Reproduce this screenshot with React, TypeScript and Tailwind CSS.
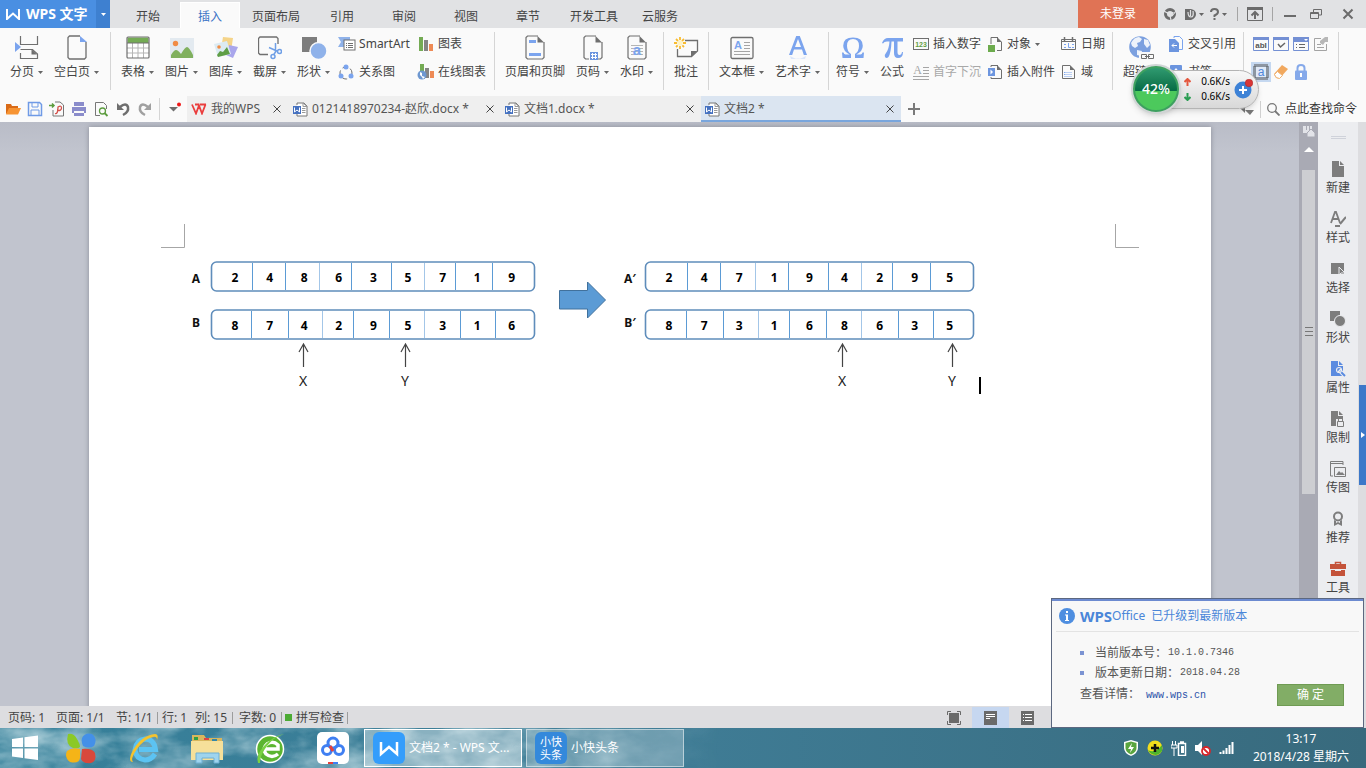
import type { ReactNode } from 'react';

interface SvgProps {
  w: number;
  h: number;
  children: ReactNode;
}

function Svg({ w, h, children }: SvgProps) {
  return (
    <svg width={w} height={h} viewBox={`0 0 ${w} ${h}`} fill="none" className="shrink-0" aria-hidden="true">
      {children}
    </svg>
  );
}

const Caret = () => (
  <Svg w={5} h={3}>
    <path d="M0 0h5L2.5 3z" fill="#666" />
  </Svg>
);

/* ---------- Ribbon icons ---------- */

const GRAY = '#6f6f6f';
const BLUE = '#7ba4ee';

const PageBreakIcon = () => (
  <Svg w={24} h={26}>
    <path d="M5.500 2v8.500h17V2M5.500 19v5.500h17V20l-5-4.500h-12" stroke={GRAY} strokeWidth="1.200" />
    <path d="M16.500 15v5.500H22z" fill={GRAY} />
    <path d="M0 8l6 5-6 5z" fill={BLUE} />
  </Svg>
);

const BlankPageIcon = () => (
  <Svg w={22} h={26}>
    <path d="M14 2H3.500L2 3.500v20L3.500 25h15l1.500-1.500V8" stroke={GRAY} strokeWidth="1.300" />
    <path d="M14 2v6h7z" fill={BLUE} />
  </Svg>
);

const TableIcon = () => (
  <Svg w={24} h={26}>
    <rect x="1" y="3" width="22" height="21" rx="1" fill="#fff" />
    <path d="M1.500 3.500h21V9h-21z" fill="#74ab54" />
    <path d="M6.500 9v15M12 9v15M17.500 9v15M1 14h22M1 19h22" stroke="#b5b5b5" />
    <path d="M1 9h22" stroke={GRAY} />
    <rect x="1" y="3" width="22" height="21" rx="1" stroke={GRAY} strokeWidth="1.200" />
  </Svg>
);

const PictureIcon = () => (
  <Svg w={24} h={26}>
    <path d="M0 4h24v20H0z" fill="#e3eaf0" />
    <circle cx="5.500" cy="9.500" r="2.700" fill="#f08c46" />
    <path d="M1 24v-3q3-5 5-5t5 4q4-7 6-7t6 8v3z" fill="#80b05e" />
  </Svg>
);

const GalleryIcon = () => (
  <Svg w={24} h={26}>
    <path d="M9 3l10 1-2 13-10-2z" fill="#f5d489" />
    <path d="M15 11l9 2-5 11-7-3z" fill="#a9a6ec" />
    <path d="M0 10l13-3 4 13-13 3z" fill="#dcebf3" />
    <circle cx="5" cy="13" r="1.800" fill="#f08c46" />
    <path d="M3 21l3-4 3 1 4-5 3 7-12 3z" fill="#5f9e46" />
  </Svg>
);

const ScreenshotIcon = () => (
  <Svg w={24} h={26}>
    <path d="M10 20.500H2L.500 19V4.500L2 3h16.500L20 4.500V10" stroke={GRAY} strokeWidth="1.300" />
    <g stroke="#6f9fe6" strokeWidth="1.500">
      <path d="M17.500 9v9l-2 3M11 13.500l9 4M17 17l3 0" />
      <circle cx="21.500" cy="17.500" r="2" />
      <circle cx="15" cy="22.500" r="2" />
    </g>
  </Svg>
);

const ShapesIcon = () => (
  <Svg w={26} h={26}>
    <path d="M1 3h15v15H1z" fill="#7d7d7d" />
    <circle cx="17.500" cy="17" r="8.500" fill="#8fb2ea" stroke="#fafafa" strokeWidth="1.500" />
  </Svg>
);

const SmartArtIcon = () => (
  <Svg w={18} h={16}>
    <path d="M0 1h12v5H6v5H0l3-5z" fill="#8fb2ea" />
    <rect x="6" y="4" width="11" height="10" fill="#fff" stroke={GRAY} />
    <path d="M8 7.500h1M10 7.500h5M8 9.500h1M10 9.500h5M8 11.500h1M10 11.500h5" stroke={GRAY} />
  </Svg>
);

const RelationIcon = () => (
  <Svg w={18} h={16}>
    <circle cx="8" cy="9" r="6" stroke={GRAY} strokeDasharray="5 3" />
    <circle cx="8" cy="3" r="2.500" fill={BLUE} />
    <circle cx="3" cy="12" r="2.500" fill={BLUE} />
    <circle cx="13" cy="12" r="2.500" fill={BLUE} />
  </Svg>
);

const ChartIcon = () => (
  <Svg w={16} h={16}>
    <path d="M1 1h4v14H1z" fill="#74ab54" />
    <path d="M6 4h4v11H6z" fill="#848484" />
    <path d="M11 8h4v7h-4z" fill="#ee8a55" />
  </Svg>
);

const OnlineChartIcon = () => (
  <Svg w={18} h={16}>
    <path d="M3 0h4v10H3z" fill="#74ab54" />
    <path d="M8 4h4v10H8z" fill="#848484" />
    <path d="M13 7h4v7h-4z" fill="#ee8a55" />
    <circle cx="5" cy="11" r="4.500" fill="#6d97d0" />
    <path d="M3 8l2 1 0 3 3 1-2 2-1-2-2-2z" fill="#fff" />
  </Svg>
);

const PageOutline = () => (
  <>
    <path d="M14 2H3.500L2 3.500v20L3.500 25h15l1.500-1.500V8" stroke={GRAY} strokeWidth="1.200" />
    <path d="M13.500 2v6.500H20z" fill={GRAY} />
  </>
);

const HeaderFooterIcon = () => (
  <Svg w={22} h={26}>
    <PageOutline />
    <path d="M5 6h7v3H5zM5 19h12v3H5z" fill={BLUE} />
  </Svg>
);

const PageNumberIcon = () => (
  <Svg w={22} h={26}>
    <PageOutline />
    <path d="M7 16h9v10H7z" fill="#fafafa" />
    <rect x="8" y="18" width="8" height="8" fill="#6c95df" />
    <path d="M10.500 19v6M13.500 19v6M9 20.500h6M9 23.500h6" stroke="#fff" />
  </Svg>
);

const WatermarkIcon = () => (
  <Svg w={22} h={26}>
    <PageOutline />
    <path d="M5 11.500h12M5 14.500h12M5 17.500h12M5 20.500h12" stroke="#b5b5b5" />
    <text x="11" y="21" textAnchor="middle" fontSize="15" fontWeight="700" fill={BLUE} fontFamily="Liberation Sans">a</text>
  </Svg>
);

const CommentIcon = () => (
  <Svg w={26} h={26}>
    <path d="M4.500 15v7.500h14l6-5.500V6.500H12" stroke={GRAY} strokeWidth="1.300" />
    <path d="M18 23v-6h6z" fill={GRAY} />
    <path d="M7 3v12M1 9h12M3 5l8 8M11 5l-8 8" stroke="#f8bc31" strokeWidth="1.800" strokeDasharray="3 6 3" />
    <circle cx="7" cy="9" r="2.800" fill="#fff3c4" />
  </Svg>
);

const TextBoxIcon = () => (
  <Svg w={24} h={26}>
    <rect x="1" y="3.500" width="22" height="21" rx="1.500" stroke={GRAY} strokeWidth="1.300" />
    <text x="8" y="15" textAnchor="middle" fontSize="11" fontWeight="700" fill={BLUE} fontFamily="Liberation Sans">A</text>
    <path d="M14 8.500h6M14 11.500h6M14 14.500h6M4 17.500h16M4 20.500h16" stroke="#a5a5a5" />
  </Svg>
);

const WordArtIcon = () => (
  <Svg w={22} h={26}>
    <path d="M2 21L9.200 2h3.600L20 21h-3.200l-1.800-5.500H7L5.200 21zM8 13h6l-3-8z" fill={BLUE} />
    <path d="M3 22q8 5 16 0l-1 3h-3l-4-1-4 1H4z" fill="#dbe6fa" />
  </Svg>
);

const OmegaIcon = () => (
  <Svg w={24} h={26}>
    <path
      d="M1.500 24L1 18.500h1.500q.500 2 2 2h4.300Q2.200 17.500 2.200 11.800 2.200 3.500 12 3.500t9.800 8.300q0 5.700-6.600 8.700h4.300q1.500 0 2-2H23L22.500 24H14v-4q4-2.500 4-8.200Q18 5 12 5T6 11.800Q6 17.500 10 20v4z"
      fill={BLUE}
    />
  </Svg>
);

const PiIcon = () => (
  <Svg w={24} h={26}>
    <path d="M2 9q2-5 6-5h15v3.500h-5.500V18q0 3 2 3t2.500-3h1q0 6-5 6-4 0-4-5V7.500h-2.500Q11 19 8.500 23q-2 2-3.500 0-1-2 1-4 3-4 3.500-11.500H7q-3 0-4 2z" fill={BLUE} />
  </Svg>
);

const InsertNumberIcon = () => (
  <Svg w={16} h={14}>
    <rect x="0.500" y="1.500" width="15" height="11" stroke={GRAY} />
    <text x="8" y="10" textAnchor="middle" fontSize="7" fontWeight="700" fill="#62a043" fontFamily="Liberation Sans">123</text>
  </Svg>
);

const DropCapIcon = () => (
  <Svg w={16} h={16}>
    <text x="4.500" y="10" textAnchor="middle" fontSize="12" fill="#a5a5a5" fontFamily="Liberation Serif">A</text>
    <path d="M10 3.500h6M10 6.500h6M10 9.500h6M0 12.500h16M0 15.500h16" stroke="#a5a5a5" />
  </Svg>
);

const ObjectIcon = () => (
  <Svg w={15} h={16}>
    <path d="M3 8V1.500h7M13.500 6v8.500H9" stroke={GRAY} />
    <path d="M9 1v5h5z" fill={GRAY} />
    <path d="M0 9h7v7H0z" fill="#6cab4d" />
  </Svg>
);

const AttachmentIcon = () => (
  <Svg w={15} h={16}>
    <path d="M3 3V1.500h7M13.500 6v8.500H3V13" stroke={GRAY} />
    <path d="M9 1v5h5z" fill={GRAY} />
    <path d="M0 4h7v8H0z" fill="#6c95df" />
    <path d="M2.500 5.500L5 8l-2.500 2.500z" fill="#fff" />
  </Svg>
);

const DateIcon = () => (
  <Svg w={16} h={14}>
    <path d="M.500 2.500h14v10H.500zM.500 4.500h14" stroke={GRAY} />
    <path d="M3.500 0v4M11.500 0v4" stroke={GRAY} strokeWidth="1.500" />
    <path d="M7.500 6v4.500H10M3 7.500h2M3 10.500h2M11 7.500h2M11 10.500h2" stroke={BLUE} />
  </Svg>
);

const FieldIcon = () => (
  <Svg w={16} h={16}>
    <path d="M9 1.500H1.500v13h12V6" stroke={GRAY} />
    <path d="M9 1v5h5z" fill={GRAY} />
    <path d="M3.500 8v4M3.500 8.500h8M3.500 10.500h8M3.500 12.500h8" stroke={BLUE} strokeDasharray="1 1" />
  </Svg>
);

const HyperlinkIcon = () => (
  <Svg w={26} h={26}>
    <circle cx="12" cy="13" r="10.800" fill="#7ca0df" />
    <path d="M3 9q3-6 8-6l3 2-2 3-3 1 1 3-3 2-3-2zM16 5l4 1 2 5-3 3-3-4zM9 16l5 1-1 5-4-1z" fill="#eef3fb" />
    <path d="M11 18h15v8H11z" fill="#fafafa" />
    <path d="M13.500 20.500h5v4h-5zM20.500 20.500h5v4h-5zM17 22.500h5" stroke={GRAY} />
  </Svg>
);

const CrossRefIcon = () => (
  <Svg w={15} h={16}>
    <path d="M5 2V.500h5.500l3 3v10H10" stroke={BLUE} />
    <path d="M0 3h6l4 4v9H0z" fill="#6c95df" />
    <path d="M8 9.500H3M5 7.500l-2 2 2 2" stroke="#fff" />
  </Svg>
);

const BookmarkIcon = () => (
  <Svg w={15} h={16}>
    <rect x="1" y="1" width="12" height="14" rx="1" fill="#6c95df" />
    <path d="M7 4l4 5H3z" fill="#fff" />
  </Svg>
);

const FormTextIcon = () => (
  <Svg w={16} h={14}>
    <path d="M.500.500h15v13H.500z" stroke="#7490d4" />
    <path d="M0 0h16v3H0z" fill="#7490d4" />
    <text x="8" y="11" textAnchor="middle" fontSize="8" fontWeight="700" fill="#555" fontFamily="Liberation Sans">abI</text>
  </Svg>
);

const FormCheckIcon = () => (
  <Svg w={16} h={14}>
    <path d="M.500.500h15v13H.500z" stroke="#7490d4" />
    <path d="M0 0h16v3H0z" fill="#7490d4" />
    <path d="M5 7l2.500 3L12 6" stroke="#666" strokeWidth="1.500" />
  </Svg>
);

const FormListIcon = () => (
  <Svg w={16} h={14}>
    <path d="M.500.500h15v13H.500z" stroke="#7490d4" />
    <path d="M0 0h16v5H0z" fill="#7490d4" />
    <path d="M11 2h4l-2 2z" fill="#fff" />
    <path d="M3 7.500h1M6 7.500h6M3 10.500h1M6 10.500h6" stroke="#666" />
  </Svg>
);

const FormOptionsIcon = () => (
  <Svg w={16} h={14}>
    <path d="M8 1.500H1.500v12h12V7M4 10.500h7M4 7.500h4" stroke="#a3a3a3" />
    <path d="M7 4l5-4h3v5h-3l-2 3-3-2z" fill="#b7b7b7" />
  </Svg>
);

const ShadingIcon = () => (
  <Svg w={16} h={16}>
    <rect x="1.500" y="1.500" width="13" height="13" stroke="#555" strokeWidth="3" strokeDasharray="1 1" />
    <path d="M3 3h10v10H3z" fill="#dfe9f7" />
    <text x="8" y="12" textAnchor="middle" fontSize="12" fill="#4f86d8" fontFamily="Liberation Sans">a</text>
  </Svg>
);

const EraserIcon = () => (
  <Svg w={16} h={16}>
    <path d="M1 10l8-9 6 4-8 9q-4 2-6-4z" fill="#f1a85e" />
    <path d="M1.500 10.500l3-3 5 4-3 3q-4 0-5-4z" fill="#fff" stroke="#efb170" />
  </Svg>
);

const LockIcon = () => (
  <Svg w={16} h={16}>
    <path d="M4.500 7V4q0-3 3.500-3t3.500 3v3" stroke="#85a9ea" strokeWidth="2" />
    <rect x="2" y="6.500" width="12" height="9.500" rx="1" fill="#85a9ea" />
    <path d="M7 9h2v4H7z" fill="#fff" />
  </Svg>
);

/* ---------- Ribbon building blocks ---------- */

interface RibbonButtonProps {
  icon: ReactNode;
  label: string;
  caret?: boolean;
}

function BigButton({ icon, label, caret }: RibbonButtonProps) {
  return (
    <button className="flex shrink-0 flex-col items-center gap-1 whitespace-nowrap">
      <span className="flex h-[26px] items-center">{icon}</span>
      <span className="flex items-center gap-1">
        {label}
        {caret && <Caret />}
      </span>
    </button>
  );
}

function SmallButton({ icon, label, caret, disabled }: RibbonButtonProps & { disabled?: boolean }) {
  return (
    <button disabled={disabled} className="flex h-5 items-center gap-1 whitespace-nowrap disabled:text-[#a8a8a8]">
      <span className="flex w-4 justify-center">{icon}</span>
      {label}
      {caret && <Caret />}
    </button>
  );
}

function Group({ className, children }: { className: string; children: ReactNode }) {
  return (
    <div className={`flex h-[58px] shrink-0 items-start gap-[11px] border-r border-[#d5d5d5] pt-[2px] ${className}`}>
      {children}
    </div>
  );
}

function Ribbon() {
  return (
    <div className="flex h-[68px] shrink-0 overflow-hidden bg-[#fafafa] pt-1">
      <Group className="w-[111px] pl-[10px]">
        <BigButton icon={<PageBreakIcon />} label="分页" caret />
        <BigButton icon={<BlankPageIcon />} label="空白页" caret />
      </Group>
      <Group className="w-[384px] pl-[10px]">
        <BigButton icon={<TableIcon />} label="表格" caret />
        <BigButton icon={<PictureIcon />} label="图片" caret />
        <BigButton icon={<GalleryIcon />} label="图库" caret />
        <BigButton icon={<ScreenshotIcon />} label="截屏" caret />
        <BigButton icon={<ShapesIcon />} label="形状" caret />
        <div className="-ml-[2px] grid shrink-0 grid-cols-[79px_auto] gap-y-2">
          <SmallButton icon={<SmartArtIcon />} label="SmartArt" />
          <SmallButton icon={<ChartIcon />} label="图表" />
          <SmallButton icon={<RelationIcon />} label="关系图" />
          <SmallButton icon={<OnlineChartIcon />} label="在线图表" />
        </div>
      </Group>
      <Group className="w-[169px] pl-[10px]">
        <BigButton icon={<HeaderFooterIcon />} label="页眉和页脚" />
        <BigButton icon={<PageNumberIcon />} label="页码" caret />
        <BigButton icon={<WatermarkIcon />} label="水印" caret />
      </Group>
      <Group className="w-[45px] justify-center">
        <BigButton icon={<CommentIcon />} label="批注" />
      </Group>
      <Group className="w-[120px] pl-[10px]">
        <BigButton icon={<TextBoxIcon />} label="文本框" caret />
        <BigButton icon={<WordArtIcon />} label="艺术字" caret />
      </Group>
      <Group className="w-[284px] pl-[7px]">
        <BigButton icon={<OmegaIcon />} label="符号" caret />
        <BigButton icon={<PiIcon />} label="公式" />
        <div className="-ml-[2px] grid shrink-0 grid-cols-[74px_74px_auto] gap-y-2">
          <SmallButton icon={<InsertNumberIcon />} label="插入数字" />
          <SmallButton icon={<ObjectIcon />} label="对象" caret />
          <SmallButton icon={<DateIcon />} label="日期" />
          <SmallButton icon={<DropCapIcon />} label="首字下沉" disabled />
          <SmallButton icon={<AttachmentIcon />} label="插入附件" />
          <SmallButton icon={<FieldIcon />} label="域" />
        </div>
      </Group>
      <Group className="w-[131px] pl-[10px]">
        <BigButton icon={<HyperlinkIcon />} label="超链接" />
        <div className="-ml-[2px] grid shrink-0 gap-y-2">
          <SmallButton icon={<CrossRefIcon />} label="交叉引用" />
          <SmallButton icon={<BookmarkIcon />} label="书签" />
        </div>
      </Group>
      <Group className="w-[95px] pl-[7px]">
        <div className="grid grid-cols-[20px_20px_20px_20px] gap-y-2">
          {[
            { name: '文字型窗体域', icon: <FormTextIcon /> },
            { name: '复选框型窗体域', icon: <FormCheckIcon /> },
            { name: '下拉型窗体域', icon: <FormListIcon /> },
            { name: '窗体域选项', icon: <FormOptionsIcon /> },
            { name: '窗体域底纹', icon: <ShadingIcon />, active: true },
            { name: '重新设置窗体域', icon: <EraserIcon /> },
            { name: '保护窗体', icon: <LockIcon /> },
          ].map((item) => (
            <button
              key={item.name}
              aria-label={item.name}
              className={`flex h-5 items-center justify-center ${item.active ? 'bg-[#c5d8f0]' : ''}`}
            >
              {item.icon}
            </button>
          ))}
        </div>
      </Group>
    </div>
  );
}

/* ---------- Title bar ---------- */

const menuTabs = ['开始', '插入', '页面布局', '引用', '审阅', '视图', '章节', '开发工具', '云服务'];

function TitleBar() {
  return (
    <header className="flex h-7 shrink-0 bg-[#e1e2e4]">
      <button className="flex w-24 items-center gap-[6px] bg-[#4a8fe2] pl-[6px] text-[14px] font-bold text-white">
        <Svg w={14} h={12}>
          <path d="M1 1v10l6-5.500L13 11V1" stroke="#fff" strokeWidth="2" />
        </Svg>
        <span className="whitespace-nowrap">WPS 文字</span>
      </button>
      <button aria-label="应用菜单" className="flex w-[14px] items-center justify-center bg-[#3e80d0]">
        <Svg w={5} h={3}>
          <path d="M0 0h5L2.500 3z" fill="#fff" />
        </Svg>
      </button>
      <nav className="ml-[9px] flex items-end gap-1">
        {menuTabs.map((tab) => (
          <button
            key={tab}
            className={`flex h-[25px] items-center justify-center pt-[2px] whitespace-nowrap ${tab.length === 4 ? 'w-[66px]' : 'w-[58px]'} ${
              tab === '插入' ? 'bg-[#fafafa] text-[#3b74c6] shadow-[0_0_0_1px_#fff]' : ''
            }`}
          >
            {tab}
          </button>
        ))}
      </nav>
      <div className="ml-auto flex items-center">
        <button className="h-7 w-20 bg-[#e07355] text-white">未登录</button>
        <button aria-label="换肤" className="flex w-6 justify-center">
          <Svg w={14} h={14}>
            <circle cx="7" cy="7" r="4.500" stroke="#6b6b6b" strokeWidth="3" />
            <path d="M4 5h7L7.500 9z" fill="#e1e2e4" />
            <path d="M1 4l5 3M9 9l4-5M7 9l1 4" stroke="#e1e2e4" strokeWidth="1.200" />
          </Svg>
        </button>
        <button aria-label="文档助手" className="flex w-6 items-center justify-center gap-[3px]">
          <Svg w={11} h={12}>
            <path d="M0 1h6q5 1 5 5t-5 6H0z" fill="#6b6b6b" />
            <path d="M3 4q0 5 3 5t2-6M5.500 2v6" stroke="#e1e2e4" strokeWidth="1.200" />
          </Svg>
          <Caret />
        </button>
        <button aria-label="帮助" className="flex w-6 items-center justify-center gap-[3px]">
          <Svg w={9} h={12}>
            <path d="M1 4q0-3 3.500-3T8 4q0 2-3.500 3.500V9M4.500 10v2" stroke="#6b6b6b" strokeWidth="2" />
          </Svg>
          <Caret />
        </button>
        <span className="mx-[7px] h-[14px] w-px bg-[#a5a5a5]" />
        <button aria-label="功能区" className="flex w-5 justify-center">
          <Svg w={16} h={14}>
            <path d="M.500.500h15v13H.500z" stroke="#6b6b6b" />
            <path d="M0 0h16v3H0z" fill="#6b6b6b" />
            <path d="M8 12V6M4.500 8.500L8 5l3.500 3.500" stroke="#6b6b6b" strokeWidth="2" />
          </Svg>
        </button>
        <span className="mx-[7px] h-[14px] w-px bg-[#a5a5a5]" />
        <button aria-label="最小化" className="flex w-5 justify-center">
          <Svg w={12} h={12}>
            <path d="M0 8h12" stroke="#6b6b6b" strokeWidth="2" />
          </Svg>
        </button>
        <button aria-label="还原" className="mx-[6px] flex w-5 justify-center">
          <Svg w={12} h={12}>
            <path d="M3.500 4V1.500h8V7H9M.500 4.500h8v6h-8zM.500 5.500h8" stroke="#6b6b6b" />
          </Svg>
        </button>
        <button aria-label="关闭" className="mr-2 ml-[6px] flex w-5 justify-center">
          <Svg w={12} h={12}>
            <path d="M1.500 1.500l9 9M10.500 1.500l-9 9" stroke="#6b6b6b" strokeWidth="2" />
          </Svg>
        </button>
      </div>
    </header>
  );
}

/* ---------- Quick access bar and document tabs ---------- */

const DocIcon = () => (
  <Svg w={15} h={15}>
    <path d="M4 3V1h7l3 3v10H4v-2" stroke="#777" fill="#fff" />
    <path d="M10 1v3.500h4zM9 6.500h3.500M9 8.500h3.500M9 10.500h3.500" stroke="#999" />
    <path d="M0 4h8v8H0z" fill="#4571c0" />
    <path d="M1.500 5.500v4.500L4 8l2.500 2V5.500" stroke="#fff" />
  </Svg>
);

const CloseIcon = () => (
  <Svg w={8} h={8}>
    <path d="M.500.500l7 7M7.500.500l-7 7" stroke="#444" />
  </Svg>
);

const quickActions = [
  {
    name: '打开',
    icon: (
      <Svg w={16} h={16}>
        <path d="M1 13V3h5l1 2h6v2" fill="#d96a17" />
        <path d="M1 13.500L4 7h12l-3 6.500z" fill="#f79433" />
      </Svg>
    ),
  },
  {
    name: '保存',
    icon: (
      <Svg w={16} h={16}>
        <path d="M1.500 1.500h11l2 2v11h-13z" stroke="#6f9ae6" strokeWidth="1.500" />
        <path d="M5 2v4h6V2M4 14.500V9h8v5.500" stroke="#6f9ae6" />
      </Svg>
    ),
  },
  {
    name: '输出为PDF',
    icon: (
      <Svg w={16} h={16}>
        <path d="M4 9v6h10.500V4L11 1H6" stroke="#777" />
        <path d="M6 12.500q3 1 3-6.500 3.500-2 3.500 1T8 9.500" stroke="#d3504a" strokeWidth="1.300" />
        <path d="M0 4.500h5M3 2.500l2 2-2 2" stroke="#5c9c3f" strokeWidth="1.500" />
      </Svg>
    ),
  },
  {
    name: '打印',
    icon: (
      <Svg w={16} h={16}>
        <path d="M3 1h10v4H3zM1 6h14v6h-2v-2H3v2H1zM3 12h10v3H3z" fill="#8a8ccb" />
      </Svg>
    ),
  },
  {
    name: '打印预览',
    icon: (
      <Svg w={16} h={16}>
        <path d="M7 14.500H2.500v-13h8l3 3V8" stroke="#777" />
        <circle cx="9.500" cy="10" r="3" stroke="#5c9c3f" strokeWidth="1.300" />
        <path d="M11.500 12l3 3" stroke="#5c9c3f" strokeWidth="1.800" />
      </Svg>
    ),
  },
  {
    name: '撤销',
    icon: (
      <Svg w={16} h={16}>
        <path d="M5 6q6-5 8 0 1 5-5 8" stroke="#6e6e6e" strokeWidth="2.500" />
        <path d="M2 2v7h7z" fill="#6e6e6e" />
      </Svg>
    ),
  },
  {
    name: '恢复',
    icon: (
      <Svg w={16} h={16}>
        <path d="M11 6Q5 1 3 6q-1 5 5 8" stroke="#a0a0a0" strokeWidth="2.500" />
        <path d="M14 2v7H7z" fill="#a0a0a0" />
      </Svg>
    ),
  },
];

const documents = [
  { title: '0121418970234-赵欣.docx *', className: 'w-[212px] bg-[#efefef]' },
  { title: '文档1.docx *', className: 'w-[200px] bg-[#efefef]' },
  { title: '文档2 *', className: 'w-[200px] bg-[#dbe5f1] shadow-[inset_0_-2px_0_#79a6dd]' },
];

function DocumentBar() {
  return (
    <div className="flex h-[26px] shrink-0 items-center bg-[#fafafa] text-[#555]">
      <div className="flex pl-[2px]">
        {quickActions.map((action) => (
          <button key={action.name} aria-label={action.name} className="flex w-[22px] justify-center">
            {action.icon}
          </button>
        ))}
      </div>
      <span className="ml-[3px] h-[22px] w-px bg-[#d5d5d5]" />
      <button aria-label="自定义快速访问工具栏" className="flex w-[27px] justify-center">
        <Svg w={14} h={14}>
          <path d="M2 5h9l-4.500 4.500z" fill="#6e6e6e" />
          <circle cx="12" cy="2.500" r="2" fill="#f01818" />
        </Svg>
      </button>
      <div className="flex h-[26px] w-[102px] items-center bg-[#efefef] pr-2 pl-1">
        <button className="flex items-center gap-1 whitespace-nowrap">
          <Svg w={16} h={12}>
            <path d="M1 1.500l4 9 3-8 3 8 3.500-9M4 1.500h4M9 1.500h6" stroke="#ea3d3d" strokeWidth="1.800" />
          </Svg>
          我的WPS
        </button>
        <button aria-label="关闭我的WPS" className="ml-auto">
          <CloseIcon />
        </button>
      </div>
      {documents.map((doc) => (
        <div key={doc.title} className={`flex h-[26px] items-center pr-[7px] pl-1 ${doc.className}`}>
          <button className="flex items-center gap-1 whitespace-nowrap">
            <DocIcon />
            {doc.title}
          </button>
          <button aria-label={`关闭${doc.title}`} className="ml-auto">
            <CloseIcon />
          </button>
        </div>
      ))}
      <button aria-label="新建文档" className="ml-[7px]">
        <Svg w={12} h={12}>
          <path d="M6 0v12M0 6h12" stroke="#7a7a7a" strokeWidth="2" />
        </Svg>
      </button>
      <div className="ml-auto flex items-center pr-[9px]">
        <button aria-label="查找设置" className="mr-[6px]">
          <Svg w={14} h={12}>
            <path d="M0 5l5-4v9zM5 7h9l-4 5z" fill="#777" />
          </Svg>
        </button>
        <span className="mr-[6px] h-[17px] w-px bg-[#d0d0d0]" />
        <button className="flex items-center gap-[5px] whitespace-nowrap text-[#333]">
          <Svg w={13} h={13}>
            <circle cx="5" cy="5" r="4.300" stroke="#777" strokeWidth="1.300" />
            <path d="M8 8l4.500 4.500" stroke="#777" strokeWidth="1.800" />
          </Svg>
          点此查找命令
        </button>
      </div>
    </div>
  );
}

/* ---------- Network speed widget ---------- */

function SpeedWidget() {
  return (
    <div className="absolute top-[64px] right-[107px] flex items-center">
      <div className="z-10 flex size-[50px] items-center justify-center rounded-full border-2 border-[#d0d5d5] bg-[#3da05f] p-[2px] shadow-md">
        <div className="flex size-full items-center justify-center rounded-full bg-linear-to-b from-[#2f9a70] via-[#046b44] via-55% to-[#4cc95c] to-55% text-[14px] font-medium text-white">
          42%
        </div>
      </div>
      <div className="-ml-6 flex h-[39px] w-[102px] items-center rounded-r-full border border-[#b4b4b4] bg-linear-to-b from-[#f8f8f8] to-[#d8d8d8] pr-[5px] pl-[26px] text-[10px] text-black shadow-md">
        <div className="flex flex-col gap-[7px]">
          <Svg w={7} h={8}>
            <path d="M3.500 8V2M.500 4l3-3 3 3" stroke="#e4583f" strokeWidth="2" />
          </Svg>
          <Svg w={7} h={8}>
            <path d="M3.500 0v6M.500 4l3 3 3-3" stroke="#2a9d52" strokeWidth="2" />
          </Svg>
        </div>
        <div className="ml-auto flex flex-col leading-[15px]">
          <span>0.6K/s</span>
          <span>0.6K/s</span>
        </div>
        <button aria-label="一键加速" className="ml-1">
          <Svg w={19} h={20}>
            <circle cx="9" cy="11" r="8.500" fill="#3d82d6" />
            <path d="M9 7v8M5 11h8" stroke="#fff" strokeWidth="2" />
            <circle cx="15" cy="4" r="3.800" fill="#d93636" stroke="#a82222" strokeWidth="0.500" />
          </Svg>
        </button>
      </div>
    </div>
  );
}

/* ---------- Document content ---------- */

interface ArrayRow {
  name: string;
  x: number;
  y: number;
  width: number;
  first: number;
  step: number;
  values: number[];
  dividers: number[];
}

// Coordinates are relative to the text area of the page
const rows: ArrayRow[] = [
  { name: 'A', x: 26, y: 7, width: 324, first: 50, step: 34.6, values: [2, 4, 8, 6, 3, 5, 7, 1, 9], dividers: [67, 100, 134, 166, 206, 239, 270, 307] },
  { name: 'B', x: 26, y: 55, width: 324, first: 50, step: 34.6, values: [8, 7, 4, 2, 9, 5, 3, 1, 6], dividers: [66, 103, 137, 168, 204, 239, 275, 310] },
  { name: 'A′', x: 460, y: 7, width: 329, first: 484, step: 35.1, values: [2, 4, 7, 1, 9, 4, 2, 9, 5], dividers: [502, 535, 570, 603, 643, 676, 707, 745] },
  { name: 'B′', x: 460, y: 55, width: 329, first: 484, step: 35.1, values: [8, 7, 3, 1, 6, 8, 6, 3, 5], dividers: [501, 538, 573, 604, 641, 676, 713, 748] },
];

const pointers = [
  { name: 'X', x: 118 },
  { name: 'Y', x: 220 },
  { name: 'X', x: 657 },
  { name: 'Y', x: 767 },
];

function CrossoverDiagram() {
  return (
    <svg width="800" height="145" viewBox="0 0 800 145" fill="none" className="shrink-0">
      {rows.map((row) => (
        <g key={row.name}>
          <text x={row.x - 15} y={row.y + (row.y < 50 ? 21 : 17)} textAnchor="middle" fontSize="12" fontWeight="700" fill="#111">
            {row.name}
          </text>
          <rect x={row.x + 0.5} y={row.y} width={row.width - 1} height="29" rx="5" stroke="#5f8dbb" strokeWidth="1.600" />
          {row.dividers.map((d, i) => (
            <path key={d} d={`M${d + 0.5} ${row.y + 1}V${row.y + 28}`} stroke={i % 3 === 2 ? '#a3c6e8' : '#5b9bd5'} />
          ))}
          {row.values.map((value, i) => (
            <text
              key={i}
              x={row.first + i * row.step}
              y={row.y + 20}
              textAnchor="middle"
              fontSize="12"
              fontWeight="700"
              fill="#000"
            >
              {value}
            </text>
          ))}
        </g>
      ))}
      <path d="M374.500 35.500h28V27l18 18-18 18v-9h-28z" fill="#5b9bd5" stroke="#41719c" />
      {pointers.map((p) => (
        <g key={p.x}>
          <path d={`M${p.x + 0.5} 112V89M${p.x - 4} 97l4.500-8 4.500 8`} stroke="#444" strokeWidth="1.200" />
          <text x={p.x} y="131" textAnchor="middle" fontSize="14" fill="#222">
            {p.name}
          </text>
        </g>
      ))}
      {/* text cursor */}
      <path d="M795 122v17" stroke="#000" strokeWidth="2" />
    </svg>
  );
}

function Page() {
  return (
    <article className="mx-auto mt-[5px] h-full w-[1122px] bg-white px-[72px] pt-[97px] shadow-[0_0_5px_#8a8d98]">
      <div className="flex justify-between">
        <Svg w={24} h={24}>
          <path d="M23.500 0v23.500H0" stroke="#a6a6a6" />
        </Svg>
        <Svg w={24} h={24}>
          <path d="M.500 0v23.500H24" stroke="#a6a6a6" />
        </Svg>
      </div>
      <div className="mt-[7px] pl-6">
        <CrossoverDiagram />
      </div>
    </article>
  );
}

/* ---------- Scroll bar and task pane ---------- */

function ScrollBar() {
  return (
    <div className="flex w-[19px] shrink-0 flex-col items-center bg-[#a9aab4] pt-1">
      <Svg w={12} h={12}>
        <path d="M0 0h9v7H0z" fill="#e2e3e8" />
        <path d="M3.500 0v4M6.500 0v4" stroke="#a9aab4" />
        <path d="M4 7l4-4 4 4v4H4z" fill="#e2e3e8" stroke="#a9aab4" />
      </Svg>
      <button aria-label="向上滚动" className="mt-[9px] mb-[18px]">
        <Svg w={10} h={5}>
          <path d="M5 0l5 5H0z" fill="#fff" />
        </Svg>
      </button>
      <div className="flex h-[324px] w-[13px] items-center justify-center bg-[#cdced2]">
        <Svg w={8} h={10}>
          <path d="M0 .500h8M0 4.500h8M0 8.500h8" stroke="#777" />
        </Svg>
      </div>
    </div>
  );
}

const taskPanes = [
  {
    label: '新建',
    icon: <path d="M2 0h7v5h5v11H2zM10 0l4 4h-4z" fill="#7d7d7d" />,
  },
  {
    label: '样式',
    icon: (
      <>
        <path d="M1 12L5 1h1l4 11M2.500 8h6" stroke="#7d7d7d" strokeWidth="1.800" />
        <path d="M16 6l-6 7M5 15h5" stroke="#7d7d7d" strokeWidth="2" />
      </>
    ),
  },
  {
    label: '选择',
    icon: (
      <>
        <path d="M1 2h13v11H1z" fill="#7d7d7d" />
        <path d="M9 6v8l2-2 4 0z" fill="#7d7d7d" stroke="#ecedf0" />
      </>
    ),
  },
  {
    label: '形状',
    icon: (
      <>
        <path d="M0 0h10v10H0z" fill="#7d7d7d" />
        <circle cx="10" cy="10" r="5.500" fill="#7d7d7d" stroke="#ecedf0" />
      </>
    ),
  },
  {
    label: '属性',
    icon: (
      <>
        <path d="M1 0h7v5h5v10H1zM9 0l4 4H9z" fill="#5a8be0" />
        <path d="M9 9l6 6" stroke="#ecedf0" strokeWidth="4" />
        <path d="M10 10l5 5" stroke="#5a8be0" strokeWidth="2" />
        <circle cx="9" cy="9" r="2.500" stroke="#ecedf0" strokeWidth="1.200" />
      </>
    ),
  },
  {
    label: '限制',
    icon: (
      <>
        <path d="M1 0h7v5h5v10H1zM9 0l4 4H9z" fill="#7d7d7d" />
        <path d="M6 8h9v8H6z" fill="#ecedf0" />
        <path d="M7.500 10.500h6v5h-6zM8.500 10V8q2-2 4 0v2" stroke="#7d7d7d" />
      </>
    ),
  },
  {
    label: '传图',
    icon: (
      <>
        <path d="M3 15H.500V.500H13V4M1 2.500h12" stroke="#7d7d7d" />
        <path d="M4.500 6.500h11v9h-11z" stroke="#7d7d7d" />
        <path d="M6 14l3-4 2 2 1-1 3 3z" fill="#7d7d7d" />
      </>
    ),
  },
  {
    label: '推荐',
    icon: (
      <>
        <circle cx="8" cy="5.500" r="4" stroke="#7d7d7d" strokeWidth="2" />
        <path d="M4 9v6l4-2 4 2V9l-2 1v2l-2-1-2 1v-2z" fill="#7d7d7d" />
      </>
    ),
  },
  {
    label: '工具',
    icon: (
      <>
        <path d="M5.500 4V1.500h5V4" stroke="#c4533a" strokeWidth="1.500" />
        <path d="M0 3h16v5H0zM1 9h14v6H1z" fill="#c4533a" />
        <path d="M5 8h6v2H5z" fill="#ecedf0" />
      </>
    ),
  },
];

function TaskPane() {
  return (
    <aside className="flex w-12 shrink-0 bg-[#dddde0]">
      <div className="flex w-10 flex-col items-center bg-[#ecedf0] pt-[14px]">
        <span className="mb-[22px] h-[3px] w-[15px] border-y border-[#cfd2da]" />
        {taskPanes.map((pane) => (
          <button key={pane.label} className="flex h-[50px] shrink-0 flex-col items-center gap-[3px]">
            <Svg w={16} h={16}>{pane.icon}</Svg>
            {pane.label}
          </button>
        ))}
      </div>
      <button aria-label="展开任务窗格" className="mt-[263px] ml-px flex h-[100px] w-[7px] items-center justify-center bg-[#3c78c9]">
        <Svg w={4} h={6}>
          <path d="M0 0l4 3-4 3z" fill="#fff" />
        </Svg>
      </button>
    </aside>
  );
}

/* ---------- Update notice ---------- */

function UpdateNotice() {
  return (
    <section className="absolute right-[2px] bottom-10 h-[130px] w-[313px] border border-[#5c6880] bg-[#f8f8f8] text-[#555]">
      <div className="h-[2px] bg-[#6c8ad0]" />
      <div className="mx-1 flex h-[31px] items-center border-b border-[#e3e3e3] pl-[2px] text-[#4a86d8]">
        <Svg w={18} h={18}>
          <circle cx="9" cy="9" r="8" fill="#4e8ee0" />
          <path d="M8 4h2v2H8zM7 7.500h3V13h1v1H7v-1h1V8.500H7z" fill="#fff" />
        </Svg>
        <span className="ml-1 text-[15px] font-bold">WPS</span>
        <span className="text-[12px]">Office</span>
        <span className="ml-[6px]">已升级到最新版本</span>
      </div>
      <ul className="mt-[11px] ml-7">
        {[
          ['当前版本号：', '10.1.0.7346'],
          ['版本更新日期：', '2018.04.28'],
        ].map(([label, value]) => (
          <li key={label} className="flex h-5 items-center">
            <span className="mr-[11px] size-1 bg-[#7b93d2]" />
            {label}
            <span className="ml-px font-['Liberation_Mono',monospace] text-[10px]">{value}</span>
          </li>
        ))}
      </ul>
      <div className="mt-px mr-[19px] ml-7 flex items-center justify-between">
        <p>
          查看详情：
          <a href="http://www.wps.cn" className="ml-[6px] font-['Liberation_Mono',monospace] text-[10px] text-[#2a52a8]">
            www.wps.cn
          </a>
        </p>
        <button className="h-[22px] w-[67px] border border-[#6f9b53] bg-[#82ad66] text-white">确 定</button>
      </div>
    </section>
  );
}

/* ---------- Status bar ---------- */

const StatusDivider = () => <span className="h-3 w-px bg-[#9c9c9c]" />;

function StatusBar() {
  return (
    <footer className="flex h-[22px] shrink-0 items-center bg-[#dddde0] pt-px pl-2 whitespace-nowrap">
      <span className="w-12">页码: 1</span>
      <span className="w-[60px]">页面: 1/1</span>
      <span className="w-[41px]">节: 1/1</span>
      <StatusDivider />
      <span className="ml-1 w-[33px]">行: 1</span>
      <span className="w-[37px]">列: 15</span>
      <StatusDivider />
      <span className="ml-[6px] w-[42px]">字数: 0</span>
      <StatusDivider />
      <button className="mr-[3px] ml-[3px] flex items-center gap-1">
        <span className="size-[7px] bg-[#4cab34]" />
        拼写检查
      </button>
      <StatusDivider />
      <div className="mr-[320px] ml-auto flex">
        <button aria-label="全屏显示" className="flex h-[22px] w-[37px] items-center justify-center">
          <Svg w={14} h={14}>
            <path d="M2 2h10v10H2z" fill="#6a6a6a" />
            <path d="M.500 4V.500H4M10 .500h3.500V4M.500 10v3.500H4M10 13.500h3.500V10" stroke="#6a6a6a" />
          </Svg>
        </button>
        <button aria-label="页面视图" className="flex h-[22px] w-[37px] items-center justify-center bg-[#c6d7f0]">
          <Svg w={13} h={14}>
            <path d="M0 0h13v14H0z" fill="#6a6a6a" />
            <path d="M2 3.500h9M2 5.500h9M2 7.500h4" stroke="#fff" />
          </Svg>
        </button>
        <button aria-label="大纲视图" className="flex h-[22px] w-[37px] items-center justify-center">
          <Svg w={13} h={14}>
            <path d="M0 0h13v14H0z" fill="#6a6a6a" />
            <path d="M2 3.500h1M4 3.500h7M2 6.500h1M4 6.500h7M2 9.500h1M4 9.500h7" stroke="#fff" />
          </Svg>
        </button>
      </div>
    </footer>
  );
}

/* ---------- Desktop task bar ---------- */

const launchers = [
  {
    name: '四叶草',
    icon: (
      <>
        <path d="M3 2q6-1 9 5 3 5 3 8-2 2-7 1-8-3-5-14z" fill="#8bc926" />
        <path d="M27 2q-7-2-10 4-1 4 1 8 6 3 11 0 4-7-2-12z" fill="#4490e8" />
        <path d="M15 17q-8-2-13 2-3 6 3 11 9 2 10-4z" fill="#f5b417" />
        <path d="M17 17q10-1 13 4 2 8-4 10-8 1-10-4z" fill="#d8483c" />
      </>
    ),
  },
  {
    name: 'Internet Explorer',
    icon: (
      <>
        <path d="M27 22q-4 6-10 6-9-1-10-10 1-10 10-11 9 0 10.500 10.500H11" stroke="#5cc3f2" strokeWidth="5" />
        <path d="M5 30Q-1 30 5 18 14 3 27 2q4 0 2 6 0-4-4-3-9 2-16 12T5 30z" fill="#f4c32f" />
      </>
    ),
  },
  {
    name: '文件资源管理器',
    icon: (
      <>
        <path d="M1 3h12l2 3h16v22H1z" fill="#d9b65d" />
        <path d="M3 5h4v3H3z" fill="#2ea043" />
        <path d="M13 6h5v2h-5z" fill="#d44" />
        <path d="M21 7h5v2h-5z" fill="#38a" />
        <path d="M0 9h32v19H0z" fill="#f6e09a" />
        <path d="M5 31V21h23v10h-5v-5H11v5z" fill="#9fd4ee" stroke="#6fb0d4" />
      </>
    ),
  },
  {
    name: '浏览器',
    icon: (
      <>
        <circle cx="16" cy="17" r="13.500" fill="#5bb531" stroke="#fff" strokeWidth="1.500" />
        <path d="M24 22q-6 5-12 0-4-6 1-10 6-4 11 1v4H11" stroke="#fff" strokeWidth="3.500" />
        <path d="M4 31q-3-7 6-17T30 2q-10 3-17 12T6 31z" fill="#79d143" />
      </>
    ),
  },
  {
    name: '百度网盘',
    icon: (
      <>
        <rect width="32" height="32" rx="5" fill="#fff" />
        <circle cx="16" cy="11" r="5" stroke="#3f7ff2" strokeWidth="3" />
        <circle cx="10" cy="18" r="4.500" stroke="#3f7ff2" strokeWidth="3" />
        <circle cx="22" cy="18" r="4.500" stroke="#3f7ff2" strokeWidth="3" />
        <path d="M13 14l3 5" stroke="#e6413c" strokeWidth="3" />
        <path d="M11 30h5v2h-5z" fill="#e6413c" />
        <path d="M16 30h5v2h-5z" fill="#3f7ff2" />
      </>
    ),
  },
];

function TaskBar() {
  return (
    <div className="relative flex h-10 shrink-0 items-center overflow-hidden bg-linear-to-r from-[#35809a] via-[#3f7c95] to-[#386a7d] text-white">
      {/* clouds of the wallpaper showing through */}
      <svg className="absolute inset-0 h-full w-[720px]" aria-hidden="true">
        <filter id="clouds" x="0" y="0" width="100%" height="100%">
          <feTurbulence type="fractalNoise" baseFrequency="0.022 0.04" numOctaves="4" seed="8" />
          <feColorMatrix values="0 0 0 0 0.5  0 0 0 0 0.69  0 0 0 0 0.75  1.5 0 0 0 -0.45" />
        </filter>
        <linearGradient id="fade">
          <stop offset="0" stopColor="#fff" />
          <stop offset="0.700" stopColor="#fff" />
          <stop offset="1" stopColor="#000" />
        </linearGradient>
        <mask id="cloudMask">
          <rect width="100%" height="100%" fill="url(#fade)" />
        </mask>
        <g mask="url(#cloudMask)">
          <rect width="100%" height="100%" filter="url(#clouds)" />
        </g>
      </svg>
      <div className="relative flex w-full items-center">
        <button aria-label="开始菜单" className="flex w-[49px] justify-center">
          <Svg w={28} h={26}>
            <path d="M1 4l11-1.500V12H1zM13.500 2.300L27 .500V12H13.500zM1 13.500h11V23L1 21.500zM13.500 13.500H27V25l-13.500-1.800z" fill="#fff" />
          </Svg>
        </button>
        <div className="flex">
          {launchers.map((app) => (
            <button key={app.name} aria-label={app.name} className="flex w-[63px] justify-center">
              <Svg w={32} h={32}>{app.icon}</Svg>
            </button>
          ))}
        </div>
        <button className="flex h-[38px] w-[158px] items-center gap-1 border border-white bg-white/40 pl-2 whitespace-nowrap">
          <Svg w={32} h={32}>
            <rect width="32" height="32" rx="6" fill="#349dfb" />
            <path d="M8 10v12l8-7 8 7V10" stroke="#fff" strokeWidth="2.500" />
          </Svg>
          文档2 * - WPS 文...
        </button>
        <button className="ml-1 flex h-[38px] w-[158px] items-center gap-1 border border-white/50 bg-white/25 pl-2 whitespace-nowrap">
          <span className="flex size-8 flex-col items-center justify-center rounded-md bg-[#3489db] text-[11px] leading-[13px]">
            <span>小快</span>
            <span>头条</span>
          </span>
          小快头条
        </button>
        <div className="ml-auto flex items-center">
          <button aria-label="安全防护" className="flex w-6 justify-center">
            <Svg w={16} h={16}>
              <path d="M8 0l7 2v6q0 5-7 8-7-3-7-8V2z" fill="#fff" />
              <path d="M8 1.500l5.500 1.500v5q0 4-5.500 6.500Q2.500 12 2.500 8V3z" fill="#5aa53f" />
              <path d="M9 3L5 9h3l-1 4 4-6H8z" fill="#fff" />
            </Svg>
          </button>
          <button aria-label="360加速球" className="flex w-6 justify-center">
            <Svg w={16} h={16}>
              <circle cx="8" cy="8" r="7.500" fill="#f2dc1d" />
              <path d="M1 10q7 4 14-5v6q-5 7-12 2z" fill="#4fb52c" />
              <path d="M8 4v8M4 8h8" stroke="#111" strokeWidth="2.500" />
            </Svg>
          </button>
          <button aria-label="电源" className="flex w-6 justify-center">
            <Svg w={16} h={16}>
              <path d="M7.500 3.500h7v12h-7zM9 2h4" stroke="#fff" strokeWidth="1.500" />
              <path d="M10 6h3v7h-3z" fill="#fff" />
              <path d="M1.500 1v4M4.500 1v4M0 5h6v3H0zM3 8v8" stroke="#fff" />
            </Svg>
          </button>
          <button aria-label="音量" className="flex w-6 justify-center">
            <Svg w={16} h={16}>
              <path d="M0 5h3l4-4v14l-4-4H0z" fill="#fff" />
              <circle cx="11" cy="11" r="4" fill="#fff" stroke="#d7262b" strokeWidth="1.800" />
              <path d="M8.500 8.500l5 5" stroke="#d7262b" strokeWidth="1.800" />
            </Svg>
          </button>
          <button aria-label="网络" className="flex w-6 justify-center">
            <Svg w={16} h={14}>
              <path d="M1.500 13v-2M4.500 13V9.500M7.500 13V7M10.500 13V4M13.500 13V1" stroke="#fff" strokeWidth="2" />
            </Svg>
          </button>
          <div className="mr-[17px] ml-[14px] text-center leading-[18px] whitespace-nowrap">
            <div>13:17</div>
            <div>2018/4/28 星期六</div>
          </div>
        </div>
      </div>
    </div>
  );
}

export default function App() {
  return (
    <div className="relative flex h-screen flex-col overflow-hidden bg-[#fafafa] font-['Noto_Sans','Noto_Sans_CJK_SC',sans-serif] text-[12px] leading-4 text-[#444]">
      <TitleBar />
      <Ribbon />
      <DocumentBar />
      <div className="flex min-h-0 flex-1 overflow-hidden">
        <main className="min-w-0 flex-1 overflow-hidden bg-linear-to-b from-[#b9bcc7] to-[#c1c4ce] to-5%">
          <Page />
        </main>
        <ScrollBar />
        <TaskPane />
      </div>
      <StatusBar />
      <TaskBar />
      <SpeedWidget />
      <UpdateNotice />
    </div>
  );
}
